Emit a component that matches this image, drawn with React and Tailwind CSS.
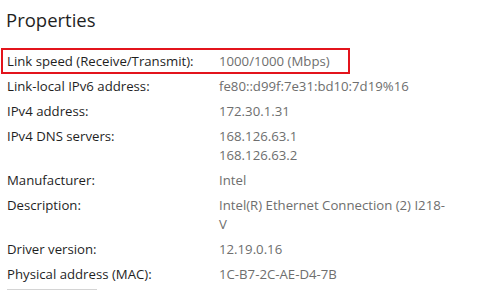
const rows = [
  { label: 'Link speed (Receive/Transmit):', value: ['1000/1000 (Mbps)'], marked: true },
  { label: 'Link-local IPv6 address:', value: ['fe80::d99f:7e31:bd10:7d19%16'] },
  { label: 'IPv4 address:', value: ['172.30.1.31'] },
  { label: 'IPv4 DNS servers:', value: ['168.126.63.1', '168.126.63.2'] },
  { label: 'Manufacturer:', value: ['Intel'] },
  { label: 'Description:', value: ['Intel(R) Ethernet Connection (2) I218-', 'V'] },
  { label: 'Driver version:', value: ['12.19.0.16'] },
  { label: 'Physical address (MAC):', value: ['1C-B7-2C-AE-D4-7B'] },
];

const App = () => {
  return (
    <div className="w-[497px] h-[291px] bg-white overflow-hidden text-[#1f1f1f] font-['Open_Sans',sans-serif]">
      <h2 className="pl-[6px] pt-[6px] h-[49px] text-[18.5px] leading-[28px] font-normal">Properties</h2>

      {/* Property rows */}
      <div className="pl-[7px] text-[13.2px] leading-[19px]">
        {rows.map((row) => (
          <div key={row.label} className="relative flex py-[3px]">
            {row.marked && (
              <span className="absolute left-[-6px] top-[-1px] w-[349px] h-[26px] border-2 border-[#e3141c]" />
            )}
            <div className="w-[212px] shrink-0">{row.label}</div>
            <div className="text-[#6e6e6e]">
              {row.value.map((line) => (
                <div key={line}>{line}</div>
              ))}
            </div>
          </div>
        ))}
      </div>

      <div className="ml-[7px] mt-[2px] w-[90px] border-t border-[#d4d4d4]" />
    </div>
  );
};

export default App;
